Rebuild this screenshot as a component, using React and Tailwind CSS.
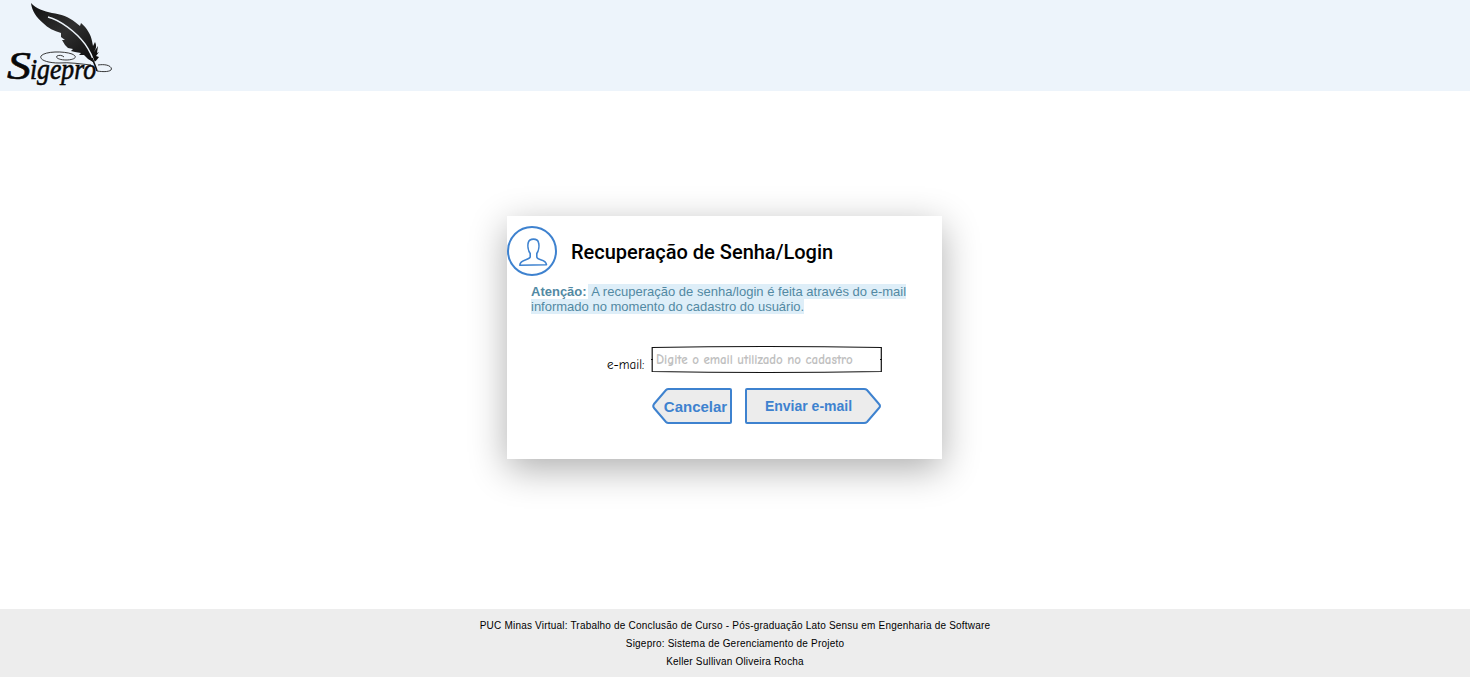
function Logo() {
  return (
    <svg className="block" width="120" height="91" viewBox="0 0 120 91" role="img" aria-label="Sigepro">
      <defs>
        <linearGradient id="feather" x1="0" y1="0" x2="1" y2="1">
          <stop offset="0" stopColor="#101010" />
          <stop offset="0.5" stopColor="#303030" />
          <stop offset="1" stopColor="#080808" />
        </linearGradient>
      </defs>
      <path
        d="M31 3 C36 9 44 11 52 13 C61 14 69 17 75 22 L80 26 L81 23 C87 28 91 35 92 41 L93 46 L95 42 C97 46 96 49 94 52 L98 46 L97 53 L99 52 L96 56 L99 57 C97 60 95 62 93 62 L88 59 L84 55 L79 55 L81 53 L75 52 L71 51 L73 49 L68 48 L65 45 L62 40 L65 40 L61 37 L61 33 C54 31 48 28 43 23 C36 17 32 11 31 3Z"
        fill="url(#feather)"
      />
      <path d="M48 17 C60 20 76 32 85 44 C90 51 93 58 95 65" fill="none" stroke="#edf4fa" strokeWidth="1.3" />
      <path d="M92 58 C94 63 96 67 97 71" fill="none" stroke="#111" strokeWidth="1.6" />
      <path
        d="M98 65 C104 64 111 65 111.500 69 C111 72 103 72 97 71 M91 65 C81 64 69 62 59 63 C48 63 39 60 41 56 C45 51 64 51 72 54 C79 57 74 60 66 60 C60 60 55 58 57 56 C59 55 62 55 64 57"
        fill="none"
        stroke="#222"
        strokeWidth="0.9"
      />
      <text className="font-['Liberation_Serif',serif] font-normal italic" fill="#080808" stroke="#080808" strokeWidth="0.6">
        <tspan x="7" y="79" textLength="24" lengthAdjust="spacingAndGlyphs" className="text-[40px]">
          S
        </tspan>
        <tspan x="30" y="79" textLength="66" lengthAdjust="spacingAndGlyphs" className="text-[30px]">
          igepro
        </tspan>
      </text>
    </svg>
  );
}

function UserIcon() {
  return (
    <svg className="block shrink-0" width="50" height="50" viewBox="0 0 50 50" fill="none" stroke="#3e82cf" strokeWidth="2">
      <circle cx="25" cy="25" r="24" />
      <path
        d="M23.200 27.500 L23.200 31 C22 34.500 13 33 12.800 39.200 L39.500 38.700 C39 33 30 34.500 29.800 31 L29.800 27.500 C31.500 25 32.500 20 31.500 16.500 C30.500 12 22.500 12 21.300 16.500 C20.400 20 21.300 25 23.200 27.500Z"
        strokeWidth="1.600"
        strokeLinejoin="round"
      />
    </svg>
  );
}

export default function App() {
  return (
    <div className="flex h-[677px] flex-col bg-white font-['Liberation_Sans',Arial,sans-serif]">
      <header className="h-[91px] shrink-0 bg-[#edf4fb]">
        <Logo />
      </header>

      <main className="flex-1 pt-[125px] pl-[507px]">
        <section className="h-[243px] w-[435px] bg-white pt-[10px] shadow-[0_10px_35px_rgba(0,0,0,0.32)]">
          <div className="flex h-[50px] items-center gap-[14px]">
            <UserIcon />
            <h1 className="pt-[2px] font-[Roboto,sans-serif] text-[20px] leading-[24px] font-medium whitespace-nowrap text-black">
              Recuperação de Senha/Login
            </h1>
          </div>
          <p className="mt-[8px] ml-[24px] text-[13px] leading-[15px] whitespace-nowrap text-[#5289a3]">
            <strong className="mr-px">Atenção:</strong>
            <span className="bg-[#deeef8]">
              {" "}<span className="tracking-[0.01px]">A recuperação de senha/login é feita através do e-mail</span>
              <br />
              informado no momento do cadastro do usuário.
            </span>
          </p>

          <form className="mt-[31px] ml-[100px]">
            <div className="flex h-[31px] items-start">
              <label
                htmlFor="email"
                className="w-[44px] pt-[12px] font-['Comic_Sans_MS','Comic_Neue',cursive] text-[13px] leading-[16px] text-black"
              >
                e-mail:
              </label>
              <div className="relative h-[29px] w-[232px]">
                <svg className="absolute inset-0" width="232" height="29" viewBox="0 0 232 29" fill="none" stroke="#111" strokeWidth="1.200">
                  <path d="M1.200 2.500 Q116 0.500 230.300 2.500 L230.300 26.500 Q116 28.500 1.200 26.500Z" />
                  <path d="M0 14.500H2M229 14.500H231" />
                </svg>
                <input
                  id="email"
                  type="text"
                  placeholder="Digite o email utilizado no cadastro"
                  className="relative h-[29px] w-full bg-transparent px-[5px] font-['Comic_Sans_MS','Comic_Neue',cursive] text-[13px] font-bold tracking-[-0.05px] outline-none placeholder:text-[#c0c0c0]"
                />
              </div>
            </div>
            <div className="mt-[12px] ml-[44px] flex gap-[12px]">
              <button type="button" className="relative h-[36px] w-[82px] pt-[2px] pl-[7px] text-[15px] font-bold text-[#3e82cf]">
                <svg className="absolute inset-0" width="82" height="36" viewBox="0 0 82 36" fill="#ececec" stroke="#3e82cf" strokeWidth="2">
                  <path d="M17.500 1 H79 Q80 1 80 2 V34 Q80 35 79 35 H17.500 Q16 35 15 34 L3 20 Q1.500 18 3 16 L15 2 Q16 1 17.500 1Z" />
                </svg>
                <span className="relative">Cancelar</span>
              </button>
              <button type="button" className="relative h-[36px] w-[137px] pr-[10px] text-[14px] font-bold text-[#3e82cf]">
                <svg className="absolute inset-0" width="137" height="36" viewBox="0 0 137 36" fill="#ececec" stroke="#3e82cf" strokeWidth="2">
                  <path d="M2 1 H119 Q121 1 122 2 L134 16 Q136 18 134 20 L122 34 Q121 35 119 35 H2 Q1 35 1 34 V2 Q1 1 2 1Z" />
                </svg>
                <span className="relative">Enviar e-mail</span>
              </button>
            </div>
          </form>
        </section>
      </main>

      <footer className="h-[68px] shrink-0 bg-[#ededed] pt-[8px] text-center text-[10px] leading-[18px] tracking-[0.2px] text-black">
        <p>PUC Minas Virtual: Trabalho de Conclusão de Curso - Pós-graduação Lato Sensu em Engenharia de Software</p>
        <p>Sigepro: Sistema de Gerenciamento de Projeto</p>
        <p>Keller Sullivan Oliveira Rocha</p>
      </footer>
    </div>
  );
}
